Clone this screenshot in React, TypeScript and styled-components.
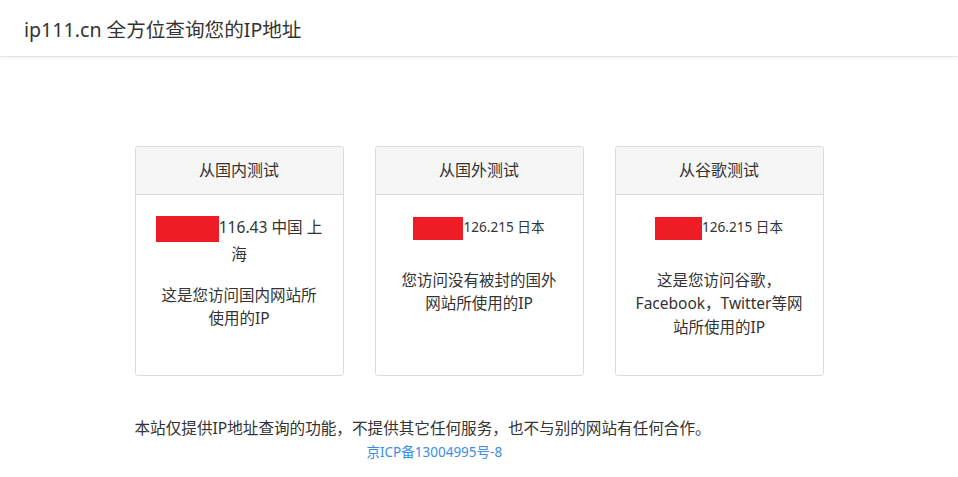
import styled, { createGlobalStyle } from 'styled-components'

const GlobalStyle = createGlobalStyle`
  body {
    margin: 0;
    background: #fff;
    color: #333;
    font-family: "Noto Sans", "Noto Sans CJK SC", sans-serif;
  }
`

interface TestCard {
  title: string
  maskWidth: number
  ip: string
  small: boolean
  desc: string
}

const cards: TestCard[] = [
  {
    title: '从国内测试',
    maskWidth: 63,
    ip: '116.43 中国 上海',
    small: false,
    desc: '这是您访问国内网站所使用的IP',
  },
  {
    title: '从国外测试',
    maskWidth: 50,
    ip: '126.215 日本',
    small: true,
    desc: '您访问没有被封的国外网站所使用的IP',
  },
  {
    title: '从谷歌测试',
    maskWidth: 47,
    ip: '126.215 日本',
    small: true,
    desc: '这是您访问谷歌，Facebook，Twitter等网站所使用的IP',
  },
]

export default function App() {
  return (
    <>
      <GlobalStyle />
      <Header>
        <Title>ip111.cn 全方位查询您的IP地址</Title>
      </Header>
      <Main>
        <CardRow>
          {cards.map(card => (
            <Card key={card.title}>
              <CardHead>{card.title}</CardHead>
              <CardBody>
                <IpLine small={card.small}>
                  <Mask style={{ width: card.maskWidth }} small={card.small} />
                  {card.ip}
                </IpLine>
                <Desc>{card.desc}</Desc>
              </CardBody>
            </Card>
          ))}
        </CardRow>
        <Footer>
          <Notice>
            本站仅提供IP地址查询的功能，不提供其它任何服务，也不与别的网站有任何合作。
          </Notice>
          <Icp href="#">京ICP备13004995号-8</Icp>
        </Footer>
      </Main>
    </>
  )
}

const Header = styled.header`
  height: 56px;
  display: flex;
  align-items: center;
  padding: 0 24px;
  border-bottom: 1px solid #e4e4e4;
  box-shadow: 0 1px 3px rgba(0, 0, 0, 0.06);
`

const Title = styled.h1`
  margin: 0;
  font-size: 19.6px;
  font-weight: 400;
  color: #333;
`

const Main = styled.main`
  width: 689px;
  margin: 0 auto;
  padding-top: 89px;
`

const CardRow = styled.div`
  display: flex;
  gap: 31px;
`

const Card = styled.section`
  width: 209px;
  height: 230px;
  box-sizing: border-box;
  border: 1px solid #dcdcdc;
  border-radius: 3px;
  overflow: hidden;
  display: flex;
  flex-direction: column;
`

const CardHead = styled.div`
  height: 47px;
  line-height: 47px;
  text-align: center;
  background: #f6f6f6;
  border-bottom: 1px solid #dcdcdc;
  font-size: 16px;
`

const CardBody = styled.div`
  padding: 20px 19px 0;
  text-align: center;
`

const IpLine = styled.p<{ small: boolean }>`
  margin: 0;
  font-size: ${p => (p.small ? '13.6px' : '15.6px')};
  line-height: 24px;
  padding-bottom: ${p => (p.small ? '11px' : '0')};
`

const Mask = styled.span<{ small: boolean }>`
  display: inline-block;
  height: ${p => (p.small ? '23px' : '26px')};
  background: #ee1c25;
  vertical-align: middle;
`

const Desc = styled.p`
  margin: 18px 0 0;
  font-size: 15.5px;
  line-height: 23.5px;
`

const Footer = styled.footer`
  padding-top: 40px;
`

const Notice = styled.p`
  margin: 0;
  font-size: 15.6px;
  line-height: 24px;
`

const Icp = styled.a`
  display: block;
  padding-left: 232px;
  font-size: 13.5px;
  line-height: 24px;
  color: #3a8ee6;
  text-decoration: none;
`
